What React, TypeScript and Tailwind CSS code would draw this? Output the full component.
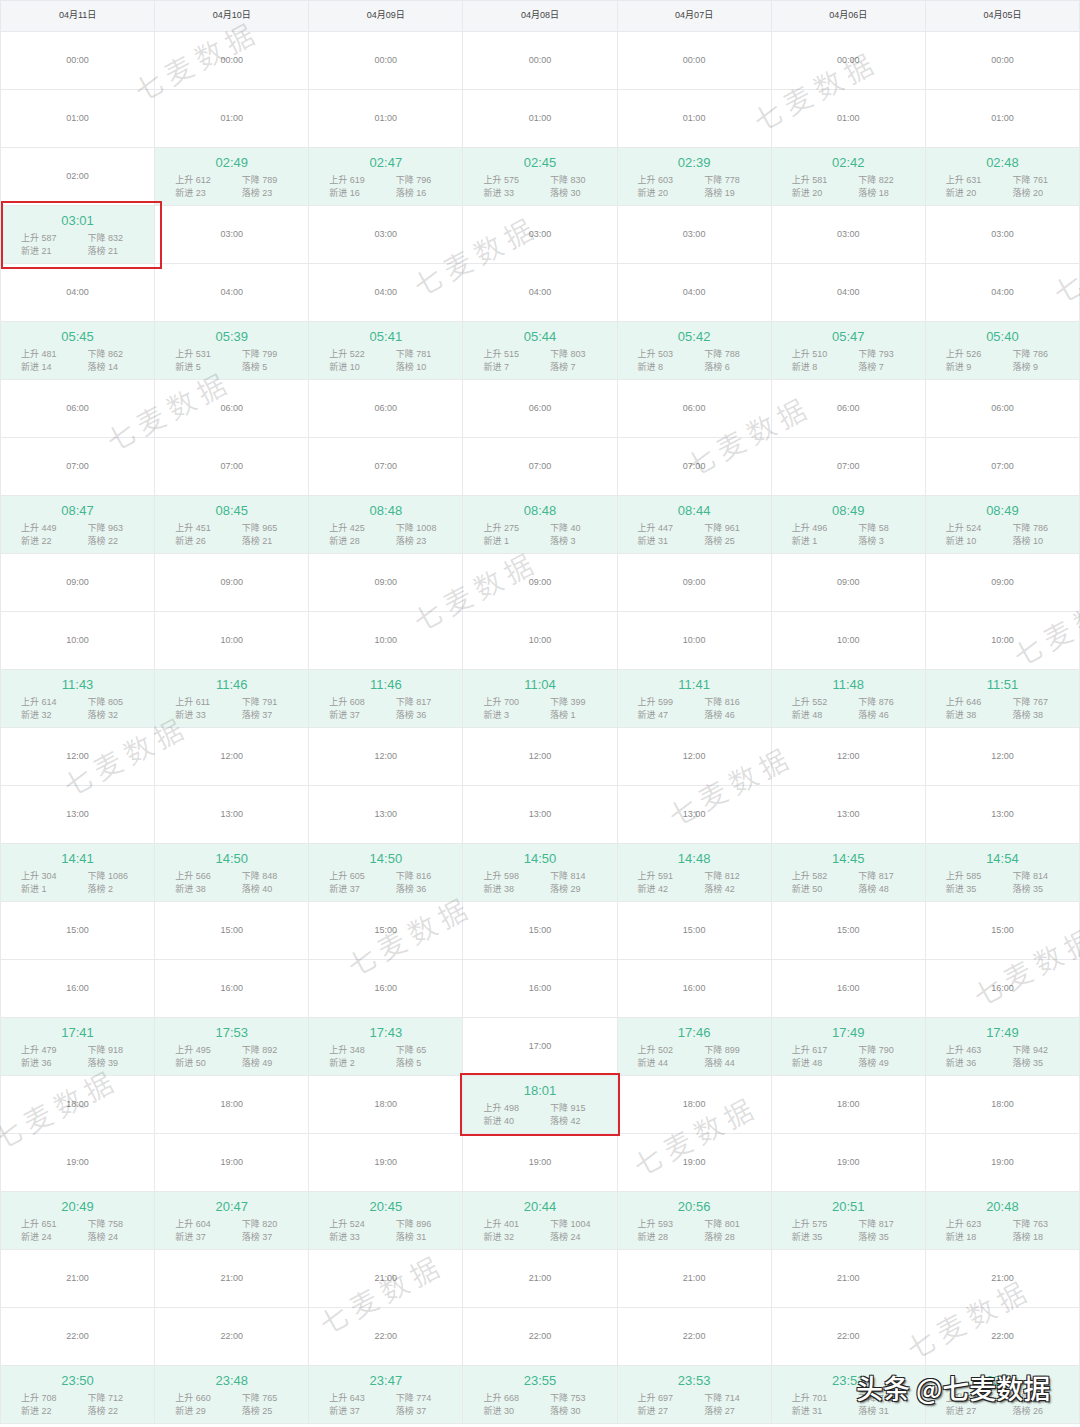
import React from "react";

type Rec = { h: number; t: string; up: number; down: number; nin: number; out: number };

const dates = ["04月11日", "04月10日", "04月09日", "04月08日", "04月07日", "04月06日", "04月05日"];

const data: Rec[][] = [
  [
    { h: 3, t: "03:01", up: 587, down: 832, nin: 21, out: 21 },
    { h: 5, t: "05:45", up: 481, down: 862, nin: 14, out: 14 },
    { h: 8, t: "08:47", up: 449, down: 963, nin: 22, out: 22 },
    { h: 11, t: "11:43", up: 614, down: 805, nin: 32, out: 32 },
    { h: 14, t: "14:41", up: 304, down: 1086, nin: 1, out: 2 },
    { h: 17, t: "17:41", up: 479, down: 918, nin: 36, out: 39 },
    { h: 20, t: "20:49", up: 651, down: 758, nin: 24, out: 24 },
    { h: 23, t: "23:50", up: 708, down: 712, nin: 22, out: 22 },
  ],
  [
    { h: 2, t: "02:49", up: 612, down: 789, nin: 23, out: 23 },
    { h: 5, t: "05:39", up: 531, down: 799, nin: 5, out: 5 },
    { h: 8, t: "08:45", up: 451, down: 965, nin: 26, out: 21 },
    { h: 11, t: "11:46", up: 611, down: 791, nin: 33, out: 37 },
    { h: 14, t: "14:50", up: 566, down: 848, nin: 38, out: 40 },
    { h: 17, t: "17:53", up: 495, down: 892, nin: 50, out: 49 },
    { h: 20, t: "20:47", up: 604, down: 820, nin: 37, out: 37 },
    { h: 23, t: "23:48", up: 660, down: 765, nin: 29, out: 25 },
  ],
  [
    { h: 2, t: "02:47", up: 619, down: 796, nin: 16, out: 16 },
    { h: 5, t: "05:41", up: 522, down: 781, nin: 10, out: 10 },
    { h: 8, t: "08:48", up: 425, down: 1008, nin: 28, out: 23 },
    { h: 11, t: "11:46", up: 608, down: 817, nin: 37, out: 36 },
    { h: 14, t: "14:50", up: 605, down: 816, nin: 37, out: 36 },
    { h: 17, t: "17:43", up: 348, down: 65, nin: 2, out: 5 },
    { h: 20, t: "20:45", up: 524, down: 896, nin: 33, out: 31 },
    { h: 23, t: "23:47", up: 643, down: 774, nin: 37, out: 37 },
  ],
  [
    { h: 2, t: "02:45", up: 575, down: 830, nin: 33, out: 30 },
    { h: 5, t: "05:44", up: 515, down: 803, nin: 7, out: 7 },
    { h: 8, t: "08:48", up: 275, down: 40, nin: 1, out: 3 },
    { h: 11, t: "11:04", up: 700, down: 399, nin: 3, out: 1 },
    { h: 14, t: "14:50", up: 598, down: 814, nin: 38, out: 29 },
    { h: 18, t: "18:01", up: 498, down: 915, nin: 40, out: 42 },
    { h: 20, t: "20:44", up: 401, down: 1004, nin: 32, out: 24 },
    { h: 23, t: "23:55", up: 668, down: 753, nin: 30, out: 30 },
  ],
  [
    { h: 2, t: "02:39", up: 603, down: 778, nin: 20, out: 19 },
    { h: 5, t: "05:42", up: 503, down: 788, nin: 8, out: 6 },
    { h: 8, t: "08:44", up: 447, down: 961, nin: 31, out: 25 },
    { h: 11, t: "11:41", up: 599, down: 816, nin: 47, out: 46 },
    { h: 14, t: "14:48", up: 591, down: 812, nin: 42, out: 42 },
    { h: 17, t: "17:46", up: 502, down: 899, nin: 44, out: 44 },
    { h: 20, t: "20:56", up: 593, down: 801, nin: 28, out: 28 },
    { h: 23, t: "23:53", up: 697, down: 714, nin: 27, out: 27 },
  ],
  [
    { h: 2, t: "02:42", up: 581, down: 822, nin: 20, out: 18 },
    { h: 5, t: "05:47", up: 510, down: 793, nin: 8, out: 7 },
    { h: 8, t: "08:49", up: 496, down: 58, nin: 1, out: 3 },
    { h: 11, t: "11:48", up: 552, down: 876, nin: 48, out: 46 },
    { h: 14, t: "14:45", up: 582, down: 817, nin: 50, out: 48 },
    { h: 17, t: "17:49", up: 617, down: 790, nin: 48, out: 49 },
    { h: 20, t: "20:51", up: 575, down: 817, nin: 35, out: 35 },
    { h: 23, t: "23:52", up: 701, down: 768, nin: 31, out: 31 },
  ],
  [
    { h: 2, t: "02:48", up: 631, down: 761, nin: 20, out: 20 },
    { h: 5, t: "05:40", up: 526, down: 786, nin: 9, out: 9 },
    { h: 8, t: "08:49", up: 524, down: 786, nin: 10, out: 10 },
    { h: 11, t: "11:51", up: 646, down: 767, nin: 38, out: 38 },
    { h: 14, t: "14:54", up: 585, down: 814, nin: 35, out: 35 },
    { h: 17, t: "17:49", up: 463, down: 942, nin: 36, out: 35 },
    { h: 20, t: "20:48", up: 623, down: 763, nin: 18, out: 18 },
    { h: 23, t: "23:51", up: 627, down: 771, nin: 27, out: 26 },
  ],
];

const marks = [
  "left-[196px] top-[60px]",
  "left-[815px] top-[90px]",
  "left-[475px] top-[255px]",
  "left-[1115px] top-[262px]",
  "left-[168px] top-[410px]",
  "left-[748px] top-[435px]",
  "left-[475px] top-[590px]",
  "left-[1075px] top-[625px]",
  "left-[125px] top-[755px]",
  "left-[730px] top-[785px]",
  "left-[409px] top-[935px]",
  "left-[1035px] top-[965px]",
  "left-[55px] top-[1108px]",
  "left-[695px] top-[1135px]",
  "left-[381px] top-[1293px]",
  "left-[968px] top-[1318px]",
];

const pad = (n: number) => (n < 10 ? "0" + n : "" + n) + ":00";

function Cell({ rec, h }: { rec?: Rec; h: number }) {
  if (rec) {
    return (
      <div className="h-[58px] border-r border-b border-[#e7e9ec] bg-[#e8f6f1] pt-[7px]">
        <div className="text-center text-[13px] leading-[16px] text-[#3fb78f]">{rec.t}</div>
        <div className="mt-[3px] grid grid-cols-2 pl-[20px] text-[9px] leading-[13px] text-[#9a9a9a]">
          <div>上升 {rec.up}</div>
          <div>下降 {rec.down}</div>
          <div>新进 {rec.nin}</div>
          <div>落榜 {rec.out}</div>
        </div>
      </div>
    );
  }
  return (
    <div className="flex h-[58px] items-center justify-center border-r border-b border-[#e7e9ec] bg-white text-[9px] text-[#8a8a8a]">
      {pad(h)}
    </div>
  );
}

export default function App() {
  const hours = Array.from({ length: 24 }, (_, i) => i);
  return (
    <div className="relative h-[1427px] w-[1080px] overflow-hidden bg-white font-['Liberation_Sans','Noto_Sans_CJK_SC',sans-serif]">
      <div className="grid w-[1080px] grid-cols-7 border-t border-l border-[#e7e9ec]">
        {dates.map((d) => (
          <div
            key={d}
            className="flex h-[31px] items-center justify-center border-r border-b border-[#e7e9ec] bg-[#f5f6f8] text-[9px] text-[#444]"
          >
            {d}
          </div>
        ))}
        {hours.map((h) =>
          data.map((col, c) => <Cell key={h + "-" + c} h={h} rec={col.find((r) => r.h === h)} />)
        )}
      </div>

      {marks.map((m, i) => (
        <div
          key={i}
          className={`pointer-events-none absolute ${m} -translate-x-1/2 -translate-y-1/2 -rotate-[28deg] whitespace-nowrap text-[28px] tracking-[6px] text-[rgba(0,0,0,0.13)] font-['Noto_Sans_CJK_SC',sans-serif]`}
        >
          七麦数据
        </div>
      ))}

      <div className="pointer-events-none absolute left-[1px] top-[201px] h-[68px] w-[161px] border-2 border-[#d9262c]" />
      <div className="pointer-events-none absolute left-[460px] top-[1073px] h-[63px] w-[160px] border-2 border-[#d9262c]" />

      <div className="pointer-events-none absolute left-[856px] top-[1370px] whitespace-nowrap text-[27px] leading-[36px] font-medium text-white font-['Noto_Sans_CJK_SC',sans-serif] [text-shadow:1px_1px_0_#222,-1px_-1px_0_#222,1px_-1px_0_#222,-1px_1px_0_#222,2px_2px_2px_rgba(0,0,0,0.6)]">
        头条 @七麦数据
      </div>
    </div>
  );
}
